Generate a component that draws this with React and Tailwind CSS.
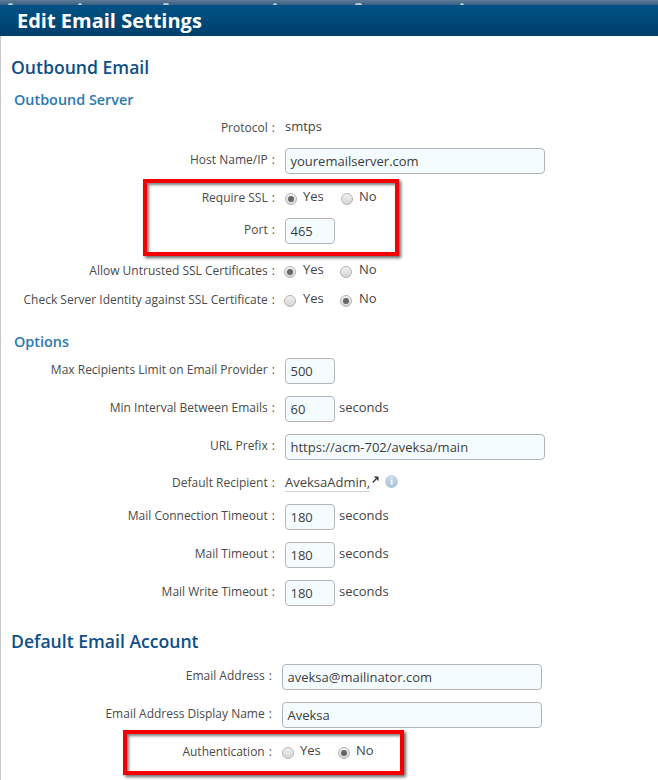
function Radio({ on, shifted }) {
  return (
    <span className={`flex h-[12px] w-[12px] shrink-0 translate-y-[1px] items-center justify-center rounded-full border border-[#b5b5b5] bg-gradient-to-b from-[#f2f2f2] to-[#d4d4d4] ${shifted ? "-translate-x-[1px]" : ""}`}>
      {on && <span className="h-[6px] w-[6px] rounded-full bg-[#666666]" />}
    </span>
  );
}

function Row({ label, mt, children, up, labelW = "w-[275px]", gap = "ml-[10px]" }) {
  return (
    <div className={`flex h-[26px] items-center ${mt}`}>
      <div className={`${labelW} shrink-0 text-right text-[12px] text-[#4a4a4a] ${up ? "-translate-y-[1px]" : ""}`}>
        {label}&nbsp;<span className="ml-[1px]">:</span>
      </div>
      <div className={`${gap} flex items-center text-[13px] text-[#444444]`}>{children}</div>
    </div>
  );
}

function Field({ value, w }) {
  return (
    <div className={`${w} flex h-[26px] items-center rounded-[4px] border border-[#b4b4b4] bg-[#f5fcff] pl-[4.5px] pt-[1px] text-[13px] text-[#3c3c3c]`}>
      {value}
    </div>
  );
}

function YesNo({ yes, shifted }) {
  return (
    <div className="flex items-center">
      <div className="flex w-[56px] items-center gap-[6px]">
        <Radio on={yes} shifted={shifted} />
        <span className="-translate-y-[1px]">Yes</span>
      </div>
      <div className="flex items-center gap-[6px]">
        <Radio on={!yes} shifted={shifted} />
        <span className="-translate-y-[1px]">No</span>
      </div>
    </div>
  );
}

function Seconds() {
  return <span className="ml-[4px] -translate-y-[1px]">seconds</span>;
}

const marks = [
  { left: "left-[8px]", w: "w-[5px]" },
  { left: "left-[78px]", w: "w-[4px]" },
  { left: "left-[163px]", w: "w-[6px]" },
  { left: "left-[273px]", w: "w-[4px]" },
  { left: "left-[355px]", w: "w-[7px]" },
  { left: "left-[460px]", w: "w-[4px]" },
];

export default function App() {
  return (
    <div className="relative h-[780px] w-[658px] overflow-hidden bg-white pt-[5px] font-['Open_Sans',sans-serif]">
      <div className="absolute left-0 top-0 h-[5px] w-full bg-gradient-to-b from-[#5f7a96] to-[#3a5f85]" />
      {marks.map((m) => (
        <div key={m.left} className={`absolute top-[3px] h-[2px] rounded-t-full bg-[#b9c6d2] ${m.left} ${m.w}`} />
      ))}
      <div className="absolute bottom-0 left-0 top-[36px] w-[1px] bg-[#c8c8c8]" />

      <div className="flex h-[31px] items-center bg-gradient-to-b from-[#005385] to-[#003f6c] pl-[17px] text-[20px] font-bold text-white">
        Edit Email Settings
      </div>

      <h1 className="ml-[11px] mt-[18px] h-[27px] text-[17.6px] leading-[27px] font-semibold text-[#0e4f86]">Outbound Email</h1>
      <h2 className="ml-[14px] mt-[9px] h-[20px] text-[14.4px] leading-[20px] font-semibold text-[#2a7ab0]">Outbound Server</h2>

      <Row label="Protocol" mt="mt-[5px]"><span className="-translate-y-[1px]">smtps</span></Row>
      <Row label="Host Name/IP" mt="mt-[7px]" up><Field value="youremailserver.com" w="w-[260px]" /></Row>
      <Row label="Require SSL" mt="mt-[11px]"><YesNo yes /></Row>
      <Row label="Port" mt="mt-[7px]" up><Field value="465" w="w-[50px]" /></Row>
      <Row label="Allow Untrusted SSL Certificates" mt="mt-[14px]"><YesNo yes shifted /></Row>
      <Row label="Check Server Identity against SSL Certificate" mt="mt-[3px]"><YesNo yes={false} shifted /></Row>

      <h2 className="ml-[14px] mt-[19px] h-[20px] text-[14.4px] leading-[20px] font-semibold text-[#2a7ab0]">Options</h2>

      <Row label="Max Recipients Limit on Email Provider" mt="mt-[6px]" up><Field value="500" w="w-[50px]" /></Row>
      <Row label="Min Interval Between Emails" mt="mt-[12px]" up><Field value="60" w="w-[50px]" /><Seconds /></Row>
      <Row label="URL Prefix" mt="mt-[12px]" up><Field value="https://acm-702/aveksa/main" w="w-[260px]" /></Row>
      <Row label="Default Recipient" mt="mt-[10px]">
        <span className="border-b border-[#cfcfcf] pb-[1px] leading-[16px]">AveksaAdmin,</span>
        <svg width="7" height="7" viewBox="0 0 7 7" className="mb-[7px] ml-[2px]">
          <path d="M0.8 6.5 L4 3" fill="none" stroke="#333333" strokeWidth="1.3" />
          <path d="M1.8 0.5 H6.5 V5.2 Z" fill="#333333" />
        </svg>
        <span className="mb-[3px] ml-[7px] flex h-[13px] w-[13px] -translate-x-[1px] items-center justify-center rounded-full bg-gradient-to-b from-[#c9d9e8] to-[#a9c3da] text-[9px] font-bold leading-none text-white">i</span>
      </Row>
      <Row label="Mail Connection Timeout" mt="mt-[8px]" up><Field value="180" w="w-[50px]" /><Seconds /></Row>
      <Row label="Mail Timeout" mt="mt-[12px]" up><Field value="180" w="w-[50px]" /><Seconds /></Row>
      <Row label="Mail Write Timeout" mt="mt-[12px]" up><Field value="180" w="w-[50px]" /><Seconds /></Row>

      <h1 className="ml-[11px] mt-[22px] h-[27px] text-[17.6px] leading-[27px] font-semibold text-[#0e4f86]">Default Email Account</h1>

      <Row label="Email Address" mt="mt-[9px]" labelW="w-[272px]" up><Field value="aveksa@mailinator.com" w="w-[260px]" /></Row>
      <Row label="Email Address Display Name" mt="mt-[12px]" labelW="w-[272px]" up><Field value="Aveksa" w="w-[260px]" /></Row>
      <Row label="Authentication" mt="mt-[11px]" labelW="w-[272px]"><YesNo yes={false} /></Row>

      <div className="absolute left-[143px] top-[179px] h-[77px] w-[256px] border-[4px] border-[#f40000] shadow-[2px_2px_3px_rgba(0,0,0,0.6),inset_2px_2px_3px_rgba(0,0,0,0.5)]" />
      <div className="absolute left-[123px] top-[730px] h-[45px] w-[281px] border-[4px] border-[#f40000] shadow-[2px_2px_3px_rgba(0,0,0,0.6),inset_2px_2px_3px_rgba(0,0,0,0.5)]" />
    </div>
  );
}
